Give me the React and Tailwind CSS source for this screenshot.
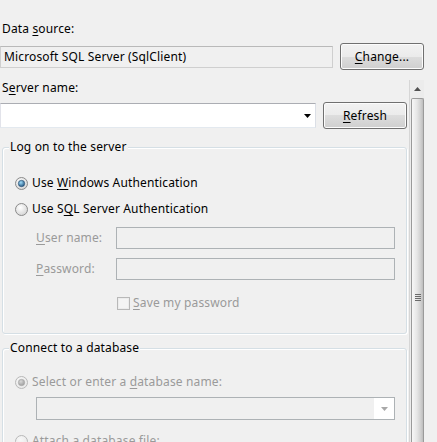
import React from 'react'

const FONT = { fontFamily: '"Noto Sans", "Liberation Sans", sans-serif' }

function U({ children }) {
  return <span className="underline underline-offset-[2px] decoration-1">{children}</span>
}

function Radio({ checked, disabled, id }) {
  const ring = disabled ? '#b8b8b8' : '#8a8a8a'
  return (
    <svg width="13" height="13" viewBox="0 0 13 13" className="shrink-0">
      <defs>
        <radialGradient id={`${id}-bg`} cx="40%" cy="35%" r="75%">
          <stop offset="0" stopColor={disabled ? '#f8f8f8' : '#ffffff'} />
          <stop offset="1" stopColor={disabled ? '#e6e6e6' : '#d0d0d0'} />
        </radialGradient>
        <radialGradient id={`${id}-dot`} cx="40%" cy="35%" r="70%">
          <stop offset="0" stopColor={disabled ? '#d8d8d8' : '#9fdcfa'} />
          <stop offset="1" stopColor={disabled ? '#9a9a9a' : '#1d507c'} />
        </radialGradient>
      </defs>
      <circle cx="6.5" cy="6.5" r="6" fill={`url(#${id}-bg)`} stroke={ring} />
      {checked && <circle cx="6.5" cy="6.5" r="3.2" fill={`url(#${id}-dot)`} stroke={disabled ? '#a8a8a8' : '#2a4e6e'} strokeWidth="0.6" />}
    </svg>
  )
}

function Button({ children, className = '' }) {
  return (
    <div className={`flex items-center justify-center h-[27px] rounded-[3px] border border-[#707070] shadow-[inset_0_0_0_1px_#fcfcfc] bg-[linear-gradient(to_bottom,#f2f2f2_0%,#ebebeb_50%,#dddddd_50%,#cfcfcf_100%)] text-black ${className}`}>
      {children}
    </div>
  )
}

function Group({ title, children, className = '' }) {
  return (
    <fieldset className={`mx-[2px] border border-[#d5dfe5] rounded-[3px] shadow-[inset_1px_1px_0_#ffffff,1px_1px_0_#ffffff] ${className}`}>
      <legend className="ml-[6px] px-[1px] h-[16px] leading-[16px] text-black bg-[#f0f0f0]">{title}</legend>
      {children}
    </fieldset>
  )
}

function TextBox({ className = '' }) {
  return <div className={`h-[22px] border border-[#adb2b5] bg-[#f0f0f0] ${className}`} />
}

export default function App() {
  return (
    <div style={FONT} className="w-[437px] h-[442px] overflow-hidden bg-[#f0f0f0] text-[12px] leading-[16px] tracking-[0.15px] text-black">
      <div className="w-[424px]">
        {/* data source */}
        <div className="pt-[21px] pl-[2px] h-[37px]">
          Data <U>s</U>ource:
        </div>
        <div className="mt-[6px] flex items-center h-[27px]">
          <div className="w-[333px] h-[22px] border border-[#cfcfcf] border-t-[#b9b9b9] bg-[#f0f0f0] flex items-center pl-[3px]">
            Microsoft SQL Server (SqlClient)
          </div>
          <Button className="ml-[7px] w-[84px]"><span><U>C</U>hange...</span></Button>
        </div>
      </div>

      <div className="mt-[10px] flex h-[362px]">
        <div className="w-[409px]">
          <div className="h-[16px] pl-[2px]">
            S<U>e</U>rver name:
          </div>
          <div className="mt-[6px] flex items-center h-[27px]">
            <div className="w-[316px] h-[25px] bg-white border border-[#abadb3] border-l-[#e2e3ea] border-r-[#dbdfe6] border-b-[#e3e9ef] flex items-center justify-end pr-[4px]">
              <svg width="7" height="4" viewBox="0 0 7 4"><path d="M0 0h7L3.5 4z" fill="#000" /></svg>
            </div>
            <Button className="ml-[7px] w-[84px]"><span><U>R</U>efresh</span></Button>
          </div>

          <Group title="Log on to the server" className="mt-[10px] h-[195px]">
            <div className="pl-[12px] pt-[15px]">
              <div className="flex items-center gap-[4px] h-[26px]">
                <Radio checked id="r1" />
                <span>Use <U>W</U>indows Authentication</span>
              </div>
              <div className="flex items-center gap-[4px] h-[26px]">
                <Radio id="r2" />
                <span>Use S<U>Q</U>L Server Authentication</span>
              </div>
              <div className="mt-[5px] flex items-center h-[22px] text-[#9a9a9a]">
                <span className="w-[101px] pl-[21px]"><U>U</U>ser name:</span>
                <TextBox className="w-[279px]" />
              </div>
              <div className="mt-[9px] flex items-center h-[22px] text-[#9a9a9a]">
                <span className="w-[101px] pl-[21px]"><U>P</U>assword:</span>
                <TextBox className="w-[279px]" />
              </div>
              <div className="mt-[15px] flex items-center h-[16px] pl-[102px] gap-[3px] text-[#9a9a9a]">
                <div className="w-[13px] h-[13px] border border-[#b8b8b8] bg-[#f4f4f4] shadow-[inset_0_0_0_1px_#ececec]" />
                <span><U>S</U>ave my password</span>
              </div>
            </div>
          </Group>

          <Group title="Connect to a database" className="mt-[6px] h-[140px]">
            <div className="pl-[12px] pt-[16px] text-[#9a9a9a]">
              <div className="flex items-center gap-[4px] h-[20px]">
                <Radio checked disabled id="r3" />
                <span>Select or enter a <U>d</U>atabase name:</span>
              </div>
              <div className="mt-[5px] ml-[21px] w-[359px] h-[23px] border border-[#adb2b5] bg-[#f0f0f0] flex justify-end">
                <div className="w-[20px] h-full bg-white flex items-center justify-center">
                  <svg width="7" height="4" viewBox="0 0 7 4"><path d="M0 0h7L3.5 4z" fill="#a8a8a8" /></svg>
                </div>
              </div>
              <div className="mt-[11px] flex items-center gap-[4px] h-[20px]">
                <Radio disabled id="r4" />
                <span>Attach a database file:</span>
              </div>
            </div>
          </Group>
        </div>

        {/* scrollbar */}
        <div className="w-[15px] flex flex-col border-l border-[#d6d6d6] bg-[#ececec]">
          <div className="h-[18px] flex items-center justify-center">
            <svg width="7" height="4" viewBox="0 0 7 4"><path d="M3.5 0L7 4H0z" fill="#505050" /></svg>
          </div>
          <div className="flex-1 ml-[1px] border border-[#9a9a9a] border-b-0 rounded-t-[2px] bg-[linear-gradient(to_right,#f7f7f7_0%,#e6e6e6_45%,#cfcfcf_80%,#bdbdbd_100%)] flex flex-col items-center">
            <div className="mt-[195px] flex flex-col gap-[1px]">
              <div className="w-[6px] h-[1px] bg-[#6a6a6a]" />
              <div className="w-[6px] h-[1px] bg-[#6a6a6a]" />
              <div className="w-[6px] h-[1px] bg-[#6a6a6a]" />
              <div className="w-[6px] h-[1px] bg-[#6a6a6a]" />
            </div>
          </div>
        </div>
      </div>
    </div>
  )
}
